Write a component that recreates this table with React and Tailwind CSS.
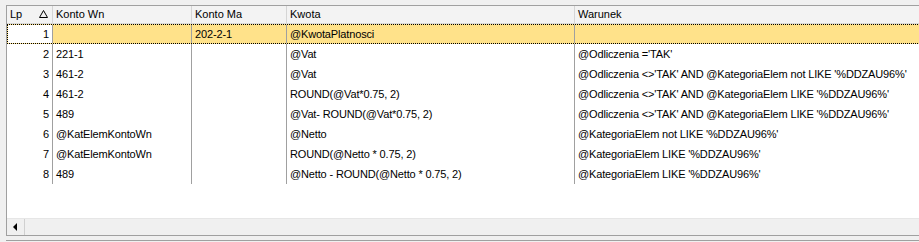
import React from "react";

const rows = [
  { lp: 1, wn: "", ma: "202-2-1", kwota: "@KwotaPlatnosci", war: "" },
  { lp: 2, wn: "221-1", ma: "", kwota: "@Vat", war: "@Odliczenia ='TAK'" },
  { lp: 3, wn: "461-2", ma: "", kwota: "@Vat", war: "@Odliczenia <>'TAK' AND @KategoriaElem not LIKE '%DDZAU96%'" },
  { lp: 4, wn: "461-2", ma: "", kwota: "ROUND(@Vat*0.75, 2)", war: "@Odliczenia <>'TAK' AND @KategoriaElem LIKE '%DDZAU96%'" },
  { lp: 5, wn: "489", ma: "", kwota: "@Vat- ROUND(@Vat*0.75, 2)", war: "@Odliczenia <>'TAK' AND @KategoriaElem LIKE '%DDZAU96%'" },
  { lp: 6, wn: "@KatElemKontoWn", ma: "", kwota: "@Netto", war: "@KategoriaElem not LIKE '%DDZAU96%'" },
  { lp: 7, wn: "@KatElemKontoWn", ma: "", kwota: "ROUND(@Netto * 0.75, 2)", war: "@KategoriaElem LIKE '%DDZAU96%'" },
  { lp: 8, wn: "489", ma: "", kwota: "@Netto - ROUND(@Netto * 0.75, 2)", war: "@KategoriaElem LIKE '%DDZAU96%'" },
];

export default function App() {
  return (
    <div
      className="w-[919px] h-[242px] bg-[#f0f0f0] overflow-hidden text-[11px] text-black"
      style={{ fontFamily: '"Liberation Sans", Arial, sans-serif' }}
    >
      <div className="pt-[5px] pl-[6px]">
        <div className="w-[940px] h-[230px] border-l border-t border-[#a0a0a0] bg-white flex flex-col">
          {/* header */}
          <div className="flex h-[18px] bg-[#f3f3f3] border-b border-[#d8d8d8] leading-[17px]">
            <div className="w-[46px] flex items-center justify-between pl-[3px] pr-[4px] border-r border-[#d5d5d5]">
              <span>Lp</span>
              <svg width="9" height="8" viewBox="0 0 9 8" className="mt-[-1px]">
                <path d="M4.5 0.5 L8.5 7.5 L0.5 7.5 Z" fill="none" stroke="#000" strokeWidth="1" />
              </svg>
            </div>
            <div className="w-[139px] pl-[3px] border-r border-[#d5d5d5]">Konto Wn</div>
            <div className="w-[95px] pl-[3px] border-r border-[#d5d5d5]">Konto Ma</div>
            <div className="w-[288px] pl-[3px] border-r border-[#d5d5d5]">Kwota</div>
            <div className="flex-1 pl-[3px]">Warunek</div>
          </div>
          {/* rows */}
          <div className="flex flex-col tracking-[-0.15px]">
            {rows.map((r, i) => {
              const sel = i === 0;
              return (
                <div
                  key={r.lp}
                  className={
                    sel
                      ? "flex h-[20px] leading-[18px] border-t border-b border-l border-dotted border-black bg-[#ffe28a]"
                      : "flex h-[20px] leading-[20px]"
                  }
                >
                  <div
                    className={
                      sel
                        ? "w-[45px] text-right pr-[3px] border-r border-[#a0a0a0] bg-white"
                        : "w-[46px] text-right pr-[3px] border-r border-[#a0a0a0]"
                    }
                  >
                    {r.lp}
                  </div>
                  <div className="w-[139px] pl-[3px] border-r border-[#a0a0a0] whitespace-nowrap">{r.wn}</div>
                  <div className="w-[95px] pl-[3px] border-r border-[#a0a0a0] whitespace-nowrap">{r.ma}</div>
                  <div className="w-[288px] pl-[3px] border-r border-[#a0a0a0] whitespace-nowrap">{r.kwota}</div>
                  <div className="flex-1 pl-[3px] whitespace-nowrap">{r.war}</div>
                </div>
              );
            })}
          </div>
          <div className="flex-1" />
          {/* horizontal scrollbar */}
          <div className="flex h-[17px] bg-[#f0f0f0] border-t border-[#e6e6e6]">
            <div className="w-[18px] flex items-center justify-center border-r border-[#d0d0d0]">
              <svg width="5" height="8" viewBox="0 0 5 8">
                <path d="M4 0 L0 4 L4 8 Z" fill="#000" />
              </svg>
            </div>
            <div className="flex-1" />
          </div>
        </div>
        <div className="h-[5px] border-t border-[#a0a0a0] bg-[#f0f0f0]" />
        <div className="border-t border-[#a0a0a0]" />
      </div>
    </div>
  );
}
